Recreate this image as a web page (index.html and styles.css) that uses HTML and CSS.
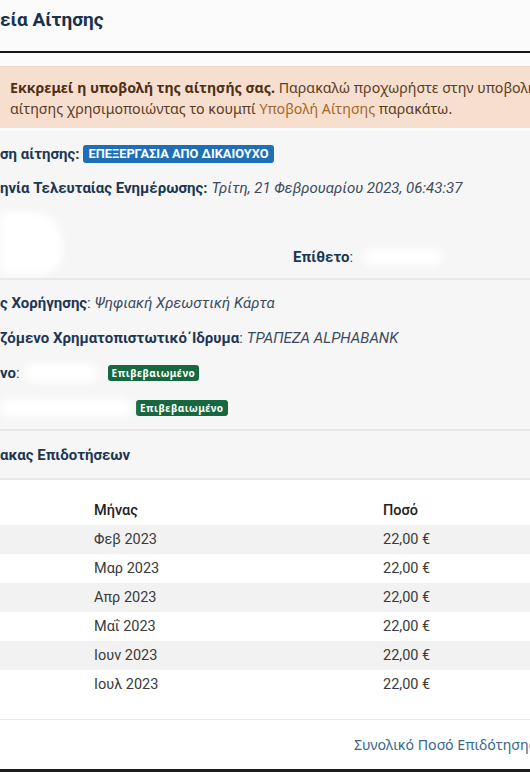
FILE: index.html
```html
<!DOCTYPE html>
<html lang="el">
<head>
<meta charset="utf-8">
<title>Στοιχεία Αίτησης</title>
<link rel="stylesheet" href="styles.css">
</head>
<body>
<div class="page">
  <header class="page-head">
    <h1 class="title">εία Αίτησης</h1>
  </header>
  <div class="alert">
    <strong>Εκκρεμεί η υποβολή της αίτησής σας.</strong> Παρακαλώ προχωρήστε στην υποβολή της<br>
    αίτησης χρησιμοποιώντας το κουμπί <span class="alert-link">Υποβολή Αίτησης</span> παρακάτω.
  </div>
  <div class="panel">
    <section class="sec sec-status">
      <div class="row"><span class="lbl">ση αίτησης:</span> <span class="badge badge-blue">ΕΠΕΞΕΡΓΑΣΙΑ ΑΠΟ ΔΙΚΑΙΟΥΧΟ</span></div>
      <div class="row"><span class="lbl">ηνία Τελευταίας Ενημέρωσης:</span> <em class="val">Τρίτη, 21 Φεβρουαρίου 2023, 06:43:37</em></div>
      <div class="name-grid">
        <div class="name-left"><span class="blob blob-big"></span></div>
        <div class="name-right"><span class="lbl">Επίθετο</span><span class="colon">:</span><span class="blob blob-surname"></span></div>
      </div>
    </section>
    <section class="sec sec-info">
      <div class="row row2"><span class="lbl">ς Χορήγησης</span><span class="colon">:</span> <em class="val">Ψηφιακή Χρεωστική Κάρτα</em></div>
      <div class="row row2"><span class="lbl">ζόμενο Χρηματοπιστωτικό΄Ιδρυμα</span><span class="colon">:</span> <em class="val">ΤΡΑΠΕΖΑ ALPHABANK</em></div>
      <div class="row row2"><span class="lbl">νο</span><span class="colon">:</span><span class="blob blob-phone"></span><span class="badge badge-green">Επιβεβαιωμένο</span></div>
      <div class="row row2"><span class="blob blob-mail"></span><span class="badge badge-green">Επιβεβαιωμένο</span></div>
    </section>
    <section class="sec sec-head">
      <h2 class="sub">ακας Επιδοτήσεων</h2>
    </section>
    <section class="table-wrap">
      <table class="grants">
        <thead>
          <tr><th class="c-pad"></th><th class="c-month">Μήνας</th><th class="c-amt">Ποσό</th></tr>
        </thead>
        <tbody>
          <tr><td></td><td>Φεβ 2023</td><td>22,00 €</td></tr>
          <tr><td></td><td>Μαρ 2023</td><td>22,00 €</td></tr>
          <tr><td></td><td>Απρ 2023</td><td>22,00 €</td></tr>
          <tr><td></td><td>Μαΐ 2023</td><td>22,00 €</td></tr>
          <tr><td></td><td>Ιουν 2023</td><td>22,00 €</td></tr>
          <tr><td></td><td>Ιουλ 2023</td><td>22,00 €</td></tr>
        </tbody>
      </table>
    </section>
    <footer class="total">
      <span class="total-text">Συνολικό Ποσό Επιδότησης</span>
    </footer>
  </div>
</div>
</body>
</html>
```

FILE: styles.css
```css
html, body {
  margin: 0;
  padding: 0;
}
body {
  width: 530px;
  height: 772px;
  overflow: hidden;
  background: #fbfbfb;
  font-family: Roboto, "Noto Sans", sans-serif;
  color: #1c3654;
}
.page {
  width: 530px;
  height: 772px;
  display: flex;
  flex-direction: column;
  border-bottom: 3px solid #1e1e1e;
  box-sizing: border-box;
}
.page-head {
  height: 51px;
  display: flex;
  align-items: center;
  border-bottom: 2px solid #151515;
  box-sizing: content-box;
}
.title {
  margin: 0 0 12px 0;
  font-family: Roboto, sans-serif;
  font-size: 19px;
  font-weight: 700;
  color: #17314f;
  white-space: nowrap;
}
.alert {
  margin-top: 13px;
  height: 62px;
  box-sizing: border-box;
  padding: 10px 0 0 10px;
  background: #f7dfcf;
  border-top: 1px solid #f3d4c0;
  color: #5a3c23;
  font-family: "Noto Sans", sans-serif;
  font-size: 14.2px;
  line-height: 21px;
  white-space: nowrap;
}
.alert strong {
  font-weight: 700;
  color: #4e3016;
}
.alert-link {
  color: #a5672c;
}
.panel {
  margin-top: 3px;
  flex: 1;
  display: flex;
  flex-direction: column;
  background: #f6f6f6;
}
.sec {
  border-bottom: 2px solid #e8e8e8;
}
.sec-status {
  padding-top: 6px;
  height: 149px;
  box-sizing: border-box;
}
.row {
  height: 34px;
  display: flex;
  align-items: center;
  white-space: nowrap;
  font-size: 15px;
}
.lbl {
  font-weight: 700;
  color: #1c3654;
}
.colon {
  color: #3c4a5c;
}
.val {
  font-style: italic;
  color: #3e4b5d;
  margin-left: 4px;
}
.badge {
  display: inline-block;
  color: #fff;
  font-weight: 700;
  border-radius: 3px;
}
.badge-blue {
  margin-left: 4px;
  background: #1e6fb7;
  font-size: 12.8px;
  line-height: 18px;
  padding: 0 5px;
}
.badge-green {
  background: #18683f;
  font-family: "Noto Sans", sans-serif;
  font-size: 10px;
  letter-spacing: 0.5px;
  line-height: 16px;
  padding: 0 4px;
}
.name-grid {
  display: grid;
  grid-template-columns: 293px 1fr;
  height: 75px;
}
.name-left {
  padding-top: 7px;
}
.name-right {
  display: flex;
  align-items: center;
  padding-top: 28px;
  font-size: 15px;
}
.blob {
  display: inline-block;
  background: #ffffff;
  filter: blur(4px);
  border-radius: 10px;
}
.blob-big {
  width: 62px;
  height: 62px;
  border-radius: 4px 30px 20px 4px;
}
.blob-surname {
  width: 80px;
  height: 16px;
  margin-left: 10px;
}
.sec-info {
  padding-top: 5px;
  height: 151px;
  box-sizing: border-box;
}
.row2 {
  height: 35px;
}
.blob-phone {
  width: 74px;
  height: 18px;
  margin-left: 4px;
  margin-right: 10px;
}
.blob-mail {
  width: 132px;
  height: 18px;
  margin-right: 4px;
}
.sec-head {
  height: 49px;
  display: flex;
  align-items: center;
  box-sizing: border-box;
}
.sub {
  margin: 0;
  font-size: 15px;
  font-weight: 700;
  color: #1c3654;
  white-space: nowrap;
}
.table-wrap {
  background: #ffffff;
  height: 240px;
  padding-top: 16px;
  box-sizing: border-box;
  border-bottom: 1px solid #e9e9e9;
}
.grants {
  width: 530px;
  border-collapse: collapse;
  font-size: 14.5px;
  color: #333;
}
.grants th {
  text-align: left;
  font-weight: 500;
  color: #222;
  height: 29px;
  padding: 0;
}
.grants td {
  height: 29px;
  padding: 0;
  color: #3a3a3a;
}
.c-pad { width: 94px; }
.c-month { width: 289px; }
.grants tbody tr:nth-child(odd) {
  background: #f2f2f2;
}
.total {
  flex: 1;
  background: #ffffff;
  display: flex;
  align-items: center;
  padding-left: 354px;
  white-space: nowrap;
}
.total-text {
  font-family: "Noto Sans", sans-serif;
  font-size: 14.2px;
  color: #38698b;
}
```
